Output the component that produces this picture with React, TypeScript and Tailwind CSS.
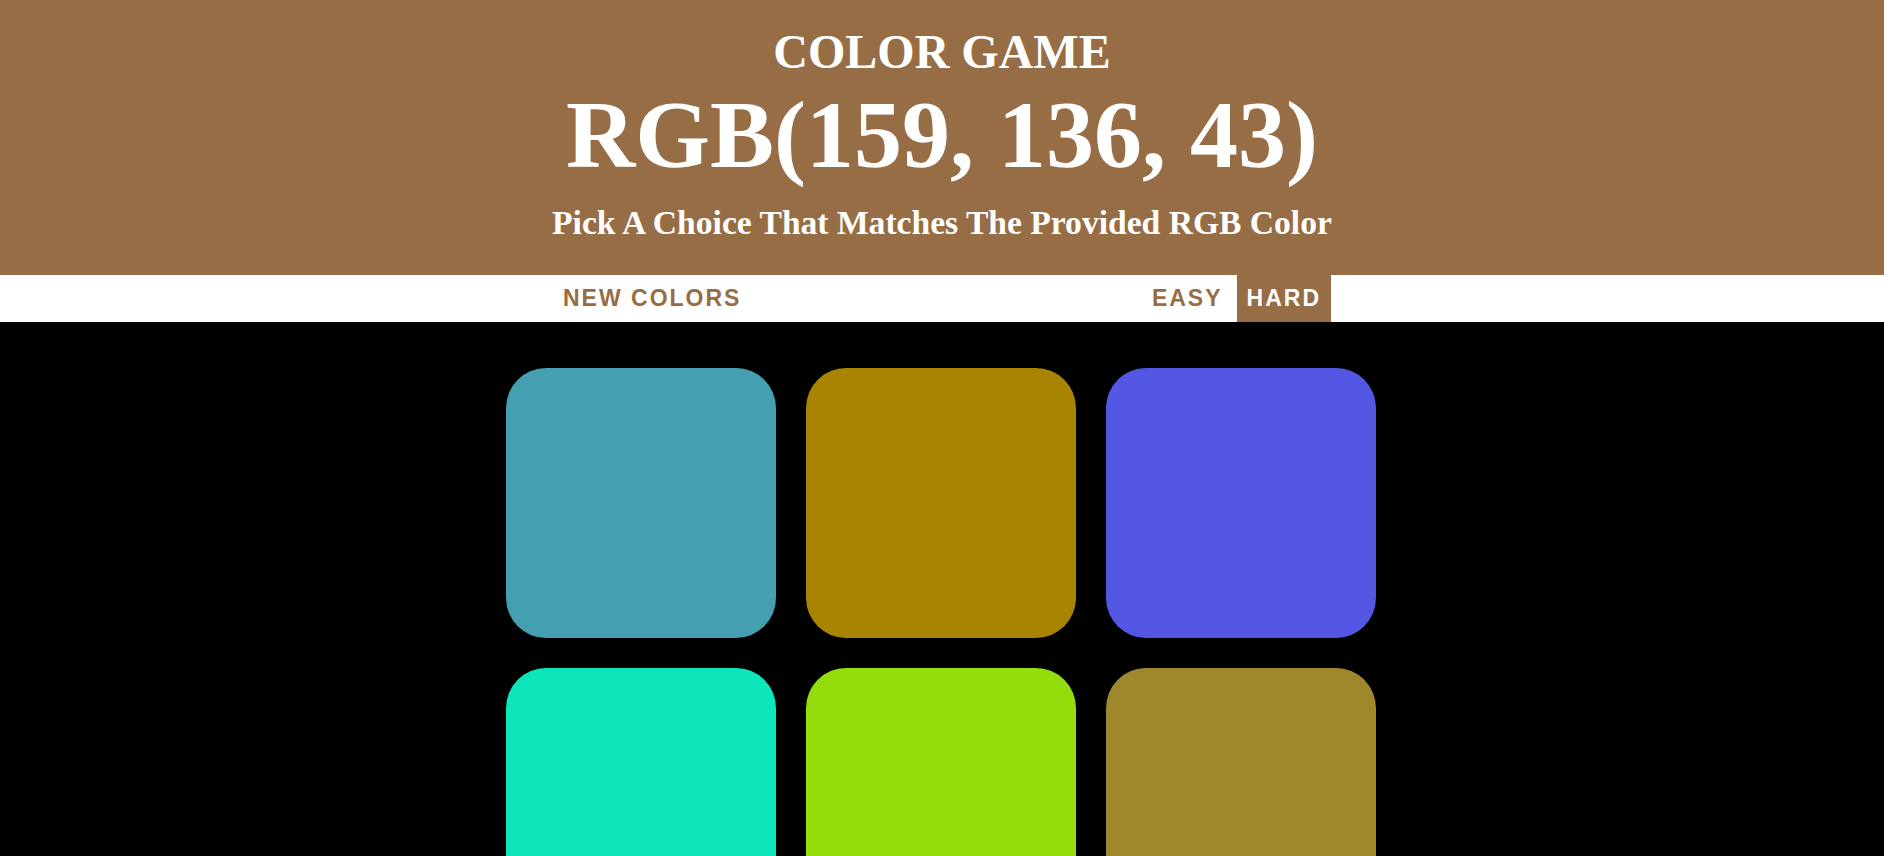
import React, { useState } from 'react';

const squares = [
  'rgb(68, 160, 176)',
  'rgb(168, 132, 0)',
  'rgb(84, 87, 227)',
  'rgb(13, 230, 187)',
  'rgb(147, 221, 10)',
  'rgb(159, 136, 43)',
];

const App: React.FC = () => {
  const [mode, setMode] = useState<'easy' | 'hard'>('hard');

  return (
    <div className="min-h-screen bg-black font-['Liberation_Sans',Arial,sans-serif]">
      {/* Header */}
      <div className="bg-[#976d46] h-[275px] text-center text-white font-['Liberation_Serif','Times_New_Roman',serif] font-bold">
        <h1 className="pt-[28px] text-[48px] leading-[48px]">COLOR GAME</h1>
        <div className="mt-[11px] text-[96px] leading-[96px]">RGB(159, 136, 43)</div>
        <p className="mt-[23px] text-[33.6px] leading-[33px]">Pick A Choice That Matches The Provided RGB Color</p>
      </div>

      {/* Stripe */}
      <div className="bg-white h-[47px] flex justify-center">
        <div className="w-[778px] flex justify-between items-stretch">
          <button className="px-[10px] text-[23px] font-bold tracking-[2px] text-[#976d46] uppercase">
            New Colors
          </button>
          <div className="flex items-stretch gap-[4px]">
            {(['easy', 'hard'] as const).map((m) => (
              <button
                key={m}
                onClick={() => setMode(m)}
                className={
                  mode === m
                    ? 'px-[10px] text-[23px] font-bold tracking-[2px] uppercase bg-[#976d46] text-white'
                    : 'px-[10px] text-[23px] font-bold tracking-[2px] uppercase text-[#976d46]'
                }
              >
                {m}
              </button>
            ))}
          </div>
        </div>
      </div>

      {/* Squares */}
      <div className="flex justify-center pt-[46px] pb-[30px]">
        <div className="grid grid-cols-3 gap-[30px] mr-[2px]">
          {squares.map((c, i) => (
            <div
              key={i}
              className="w-[270px] h-[270px] rounded-[40px]"
              style={{ backgroundColor: c }}
            />
          ))}
        </div>
      </div>
    </div>
  );
};

export default App;
